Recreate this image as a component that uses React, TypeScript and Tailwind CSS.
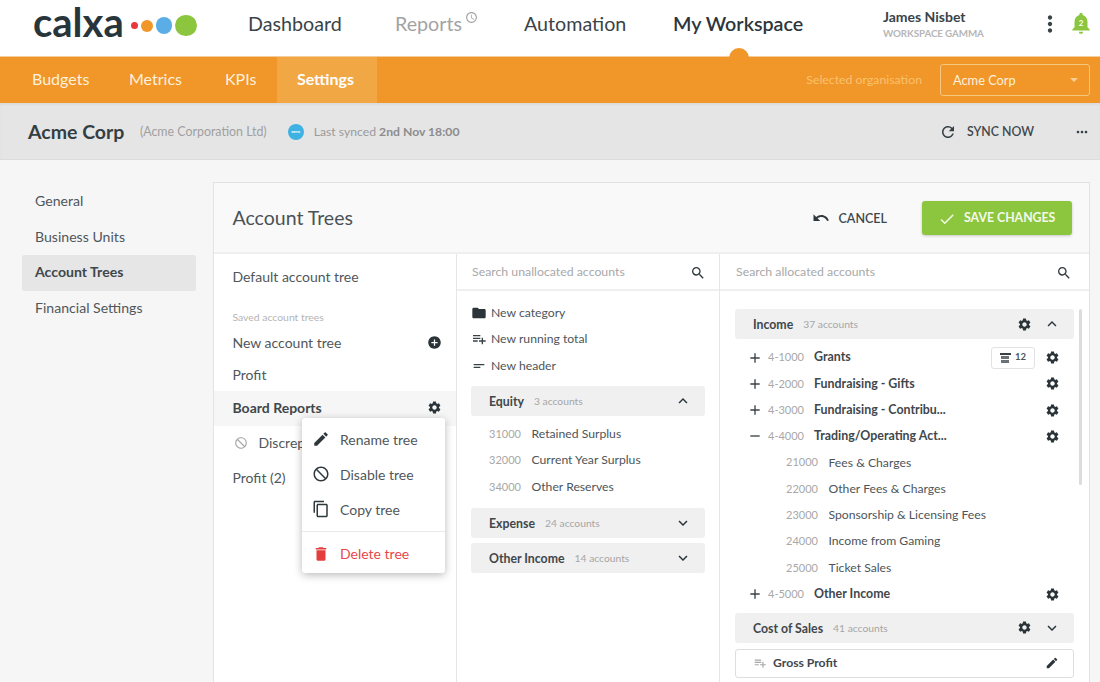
import type { ReactNode } from "react";
import {
  MdAccessTime,
  MdAdd,
  MdAddCircle,
  MdCheck,
  MdContentCopy,
  MdDelete,
  MdDoNotDisturb,
  MdEdit,
  MdExpandLess,
  MdExpandMore,
  MdFolder,
  MdMoreHoriz,
  MdMoreVert,
  MdNotifications,
  MdPlaylistAdd,
  MdRefresh,
  MdRemove,
  MdSearch,
  MdSettings,
  MdShortText,
  MdUndo,
} from "react-icons/md";

const Group = ({
  name,
  count,
  open,
  gear,
}: {
  name: string;
  count: string;
  open?: boolean;
  gear?: boolean;
}) => (
  <div className="flex h-[30px] items-center rounded-[3px] bg-[#f0f0f0] pl-[18px] pr-[13px]">
    <span className="pt-[2px] text-[12.3px] font-bold text-[#3f474b]">{name}</span>
    <span className="ml-[10px] pt-[2px] text-[10.3px] text-[#a6a6a6]">{count}</span>
    {gear && <MdSettings size={15} className="ml-auto mr-[11px] text-[#2b3438]" />}
    {open ? (
      <MdExpandLess size={18} className={`text-[#2b3438] ${gear ? "" : "ml-auto"}`} />
    ) : (
      <MdExpandMore size={18} className={`text-[#2b3438] ${gear ? "" : "ml-auto"}`} />
    )}
  </div>
);

const Leaf = ({ code, name, left }: { code: string; name: string; left: string }) => (
  <div className={`flex h-[26.3px] items-center ${left}`}>
    <span className="w-[42.5px] text-[11px] text-[#a8a8a8]">{code}</span>
    <span className="text-[12.2px] text-[#4d5559]">{name}</span>
  </div>
);

const Parent = ({
  code,
  name,
  minus,
  badge,
}: {
  code: string;
  name: string;
  minus?: boolean;
  badge?: ReactNode;
}) => (
  <div className="flex h-[26.3px] items-center pl-[12px] pr-[14.5px]">
    {minus ? (
      <MdRemove size={16} className="text-[#3a4145]" />
    ) : (
      <MdAdd size={16} className="text-[#3a4145]" />
    )}
    <span className="ml-[5px] w-[46px] text-[11px] text-[#a8a8a8]">{code}</span>
    <span className="text-[12.4px] font-bold text-[#3f474b]">{name}</span>
    <div className="ml-auto flex items-center gap-[9.5px]">
      {badge}
      <MdSettings size={15} className="text-[#2b3438]" />
    </div>
  </div>
);

const MenuItem = ({
  icon,
  label,
  red,
}: {
  icon: ReactNode;
  label: string;
  red?: boolean;
}) => (
  <div className={`flex h-[35.2px] items-center pl-[10px] ${red ? "text-[#e8474c]" : "text-[#50575b]"}`}>
    <span className="flex w-[28px] justify-start">{icon}</span>
    <span className="text-[14px]">{label}</span>
  </div>
);

export default function App() {
  return (
    <div
      className="relative h-[682px] w-[1100px] overflow-hidden bg-[#f6f6f6]"
      style={{ fontFamily: '"Lato", "Open Sans", sans-serif' }}
    >
      {/* Top nav */}
      <header className="relative z-10 flex h-[56px] items-center bg-white pl-[33px]">
        <div className="flex w-[215px] items-center">
          <span className="mb-[13px] text-[40px] font-bold leading-[30px] text-[#28353b]">calxa</span>
          <div className="-mt-[5px] ml-[7px] flex items-center gap-[3px]">
            <span className="h-[7px] w-[7px] rounded-full bg-[#e8383d]" />
            <span className="h-[12px] w-[12px] rounded-full bg-[#f19628]" />
            <span className="h-[16.5px] w-[16.5px] rounded-full bg-[#5aaee5]" />
            <span className="h-[21.5px] w-[21.5px] rounded-full bg-[#8cc63f]" />
          </div>
        </div>
        <nav className="flex items-center pb-[8px] text-[19.7px] text-[#3a4448]">
          <span className="w-[147px]">Dashboard</span>
          <span className="flex w-[129px] text-[#a3a3a3]">
            Reports
            <MdAccessTime size={13} className="ml-[3px] mt-[2px]" />
          </span>
          <span className="w-[149px]">Automation</span>
          <span className="font-semibold text-[#2c363b]">My Workspace</span>
        </nav>
        <div className="absolute left-[883px] top-[9px]">
          <div className="text-[14px] font-bold leading-[16px] text-[#39434a]">James Nisbet</div>
          <div className="mt-[1px] text-[9.8px] font-bold leading-[14px] tracking-[-0.1px] text-[#b6b6b6]">WORKSPACE GAMMA</div>
        </div>
        <MdMoreVert size={26} className="absolute left-[1037px] top-[11px] text-[#3a4448]" />
        <div className="absolute left-[1068px] top-[10px] h-[26px] w-[26px]">
          <MdNotifications size={26} className="text-[#8cc63f]" />
          <span className="absolute inset-x-0 top-[8px] text-center text-[8px] font-bold leading-[10px] text-white">2</span>
        </div>
        <span className="absolute left-[729px] top-[48px] h-[20px] w-[20px] rounded-full bg-[#f19628]" />
      </header>

      {/* Orange bar */}
      <div className="relative flex h-[47px] items-center border-t border-[#f5cd9c] bg-[#f19628] text-[16px] text-[#fdf0de]">
        <span className="mb-[2px] ml-[32px] w-[97px]">Budgets</span>
        <span className="mb-[2px] w-[96px]">Metrics</span>
        <span className="mb-[2px] w-[52px]">KPIs</span>
        <div className="flex h-full w-[100px] items-center justify-center bg-[#f2a745] pb-[2px] pr-[3px] font-bold text-white">Settings</div>
        <span className="ml-auto mr-[18px] text-[12.3px] text-[#f9c26f]">Selected organisation</span>
        <div className="mr-[10px] flex h-[32px] w-[150px] items-center justify-between rounded-[3px] border border-[#f7c67f] pl-[12px] pr-[11px] text-[12.8px]">
          <span className="pt-[1px]">Acme Corp</span>
          <span className="h-0 w-0 border-x-[4px] border-t-[4px] border-x-transparent border-t-[#f9cf95]" />
        </div>
      </div>

      {/* Org bar */}
      <div className="flex h-[57px] items-center border-b border-[#dcdcdc] bg-[#e5e5e5] pl-[28px] pt-[2px] shadow-[inset_0_2px_2px_rgba(0,0,0,0.04)]">
        <span className="text-[19.5px] font-bold text-[#353e43]">Acme Corp</span>
        <span className="ml-[15.5px] mt-[1px] text-[12.4px] text-[#a0a0a0]">(Acme Corporation Ltd)</span>
        <span className="ml-[21px] flex h-[16px] w-[16px] items-center justify-center rounded-full bg-[#3eb2e3] text-[4.5px] font-bold text-white">xero</span>
        <span className="ml-[10px] mt-[1px] text-[12.2px] text-[#9a9a9a]">
          Last synced <span className="font-bold text-[#8c8c8c]">2nd Nov 18:00</span>
        </span>
        <MdRefresh size={18} className="ml-auto text-[#353e43]" />
        <span className="ml-[10px] text-[12.3px] font-semibold text-[#3f474b]">SYNC NOW</span>
        <MdMoreHoriz size={16} className="ml-[40px] mr-[10px] text-[#353e43]" />
      </div>

      {/* Body */}
      <div className="flex pt-[22px]">
        {/* Sidebar */}
        <aside className="ml-[22px] w-[174px] pt-[2px] text-[14.1px] text-[#50575b]">
          <div className="flex h-[35.6px] items-center pb-[2px] pl-[13px]">General</div>
          <div className="flex h-[35.6px] items-center pb-[2px] pl-[13px]">Business Units</div>
          <div className="flex h-[35.6px] items-center rounded-[2px] bg-[#e6e6e6] pb-[2px] pl-[13px] font-bold text-[#3f474b]">Account Trees</div>
          <div className="flex h-[35.6px] items-center pb-[2px] pl-[13px]">Financial Settings</div>
        </aside>

        {/* Card */}
        <main className="ml-[17px] h-[520px] w-[877px] border border-[#e3e3e3] bg-white">
          <div className="flex h-[71px] items-center border-b-2 border-[#efefef] bg-[#f9f9f9] pl-[18.5px]">
            <h1 className="text-[19.5px] text-[#4a5256]">Account Trees</h1>
            <MdUndo size={18} className="ml-auto mt-[1px] text-[#2f383d]" />
            <span className="ml-[9px] mt-[3px] text-[12.5px] font-semibold text-[#3f474b]">CANCEL</span>
            <button className="ml-[35px] mr-[17px] flex h-[34px] w-[150px] items-center rounded-[3px] bg-[#8cc63f] pl-[16px] pt-[2px] text-[12.3px] font-bold text-[#f4f9ea] shadow-[0_1px_3px_rgba(0,0,0,0.2)]">
              <MdCheck size={18} className="mr-[8px]" />
              SAVE CHANGES
            </button>
          </div>

          <div className="flex">
            {/* Trees */}
            <section className="relative h-[449px] w-[243px] border-r border-[#e6e6e6] text-[14px] text-[#50575b]">
              <div className="flex h-[46px] items-center pb-[1px] pl-[18.5px]">Default account tree</div>
              <div className="mt-[11px] pl-[18.5px] text-[10.4px] leading-[12px] text-[#b4b4b4]">Saved account trees</div>
              <div className="mt-[3px] flex h-[32px] items-center justify-between pl-[18.5px] pr-[14px]">
                New account tree
                <MdAddCircle size={15} className="text-[#2b3438]" />
              </div>
              <div className="flex h-[33px] items-center pl-[18.5px]">Profit</div>
              <div className="flex h-[35px] items-center justify-between bg-[#f6f6f6] pb-[2px] pl-[18.5px] pr-[14px] font-bold text-[#3f474b]">
                Board Reports
                <MdSettings size={15} className="text-[#2b3438]" />
              </div>
              <div className="flex h-[34px] items-center pb-[1px] pl-[19.5px]">
                <MdDoNotDisturb size={14} className="mr-[11px] text-[#a8a8a8]" />
                Discrepancies
              </div>
              <div className="flex h-[34px] items-center pl-[18.5px]">Profit (2)</div>

              {/* Tree menu */}
              <div className="absolute left-[88px] top-[164px] h-[155px] w-[143px] rounded-[3px] bg-white shadow-[0_2px_8px_rgba(0,0,0,0.28)]">
                <div className="pt-[3.5px]">
                  <MenuItem icon={<MdEdit size={18} className="text-[#2f383d]" />} label="Rename tree" />
                  <MenuItem icon={<MdDoNotDisturb size={18} className="text-[#2f383d]" />} label="Disable tree" />
                  <MenuItem icon={<MdContentCopy size={18} className="text-[#2f383d]" />} label="Copy tree" />
                </div>
                <div className="mt-[4px] border-t border-[#e9e9e9] pt-[4px]">
                  <MenuItem red icon={<MdDelete size={18} className="text-[#e53e3e]" />} label="Delete tree" />
                </div>
              </div>
            </section>

            {/* Unallocated */}
            <section className="w-[263px] border-r border-[#e6e6e6]">
              <div className="flex h-[37px] items-center justify-between border-b-2 border-[#efefef] pl-[15px] pr-[13px] pt-[2px] text-[12.3px] text-[#a8a8a8]">
                Search unallocated accounts
                <MdSearch size={16} className="text-[#2f383d]" />
              </div>
              <div className="px-[14px] pt-[9px]">
                <div className="flex h-[26.3px] items-center text-[12.2px] text-[#4d5559]">
                  <MdFolder size={16} className="mr-[4px] text-[#2b3438]" />
                  New category
                </div>
                <div className="flex h-[26.3px] items-center text-[12.2px] text-[#4d5559]">
                  <MdPlaylistAdd size={16} className="mr-[4px] text-[#3a4145]" />
                  New running total
                </div>
                <div className="flex h-[26.3px] items-center text-[12.2px] text-[#4d5559]">
                  <MdShortText size={16} className="mr-[4px] text-[#3a4145]" />
                  New header
                </div>
                <div className="mt-[7px]">
                  <Group name="Equity" count="3 accounts" open />
                </div>
                <div className="pt-[5.3px]">
                  <Leaf left="pl-[18px]" code="31000" name="Retained Surplus" />
                  <Leaf left="pl-[18px]" code="32000" name="Current Year Surplus" />
                  <Leaf left="pl-[18px]" code="34000" name="Other Reserves" />
                </div>
                <div className="mt-[7.7px]">
                  <Group name="Expense" count="24 accounts" />
                </div>
                <div className="mt-[5px]">
                  <Group name="Other Income" count="14 accounts" />
                </div>
              </div>
            </section>

            {/* Allocated */}
            <section className="relative flex-1">
              <div className="flex h-[37px] items-center justify-between border-b-2 border-[#efefef] pl-[16px] pr-[17px] pt-[2px] text-[12.3px] text-[#a8a8a8]">
                Search allocated accounts
                <MdSearch size={16} className="text-[#2f383d]" />
              </div>
              <div className="absolute left-[359px] top-[55px] h-[176px] w-[3px] rounded-full bg-[#dcdcdc]" />
              <div className="w-[354px] pl-[15px] pt-[18px]">
                <Group name="Income" count="37 accounts" open gear />
                <div className="pt-[5.4px]">
                  <Parent
                    code="4-1000"
                    name="Grants"
                    badge={
                      <span className="flex h-[22px] w-[44px] items-center justify-center gap-[4px] rounded-[3px] border border-[#e2e2e2] text-[9.5px] font-bold text-[#4d5559]">
                        <span className="flex w-[11px] flex-col gap-[1px]">
                          <span className="h-[2px] bg-[#3a4145]" />
                          <span className="mx-[1.5px] h-[3px] bg-[#6b7175]" />
                          <span className="mx-[1.5px] h-[3px] bg-[#6b7175]" />
                        </span>
                        12
                      </span>
                    }
                  />
                  <Parent code="4-2000" name="Fundraising - Gifts" />
                  <Parent code="4-3000" name="Fundraising - Contribu..." />
                  <Parent code="4-4000" name="Trading/Operating Act..." minus />
                  <Leaf left="pl-[51px]" code="21000" name="Fees & Charges" />
                  <Leaf left="pl-[51px]" code="22000" name="Other Fees & Charges" />
                  <Leaf left="pl-[51px]" code="23000" name="Sponsorship & Licensing Fees" />
                  <Leaf left="pl-[51px]" code="24000" name="Income from Gaming" />
                  <Leaf left="pl-[51px]" code="25000" name="Ticket Sales" />
                  <Parent code="4-5000" name="Other Income" />
                </div>
                <div className="mt-[5.6px]">
                  <Group name="Cost of Sales" count="41 accounts" gear />
                </div>
                <div className="mt-[6px] flex h-[29px] items-center rounded-[3px] border border-[#dedede] pl-[17px] pr-[14px]">
                  <MdPlaylistAdd size={14} className="text-[#a8a8a8]" />
                  <span className="ml-[6px] text-[12.2px] font-bold text-[#3f474b]">Gross Profit</span>
                  <MdEdit size={14} className="ml-auto text-[#2b3438]" />
                </div>
              </div>
            </section>
          </div>
        </main>
      </div>
    </div>
  );
}
